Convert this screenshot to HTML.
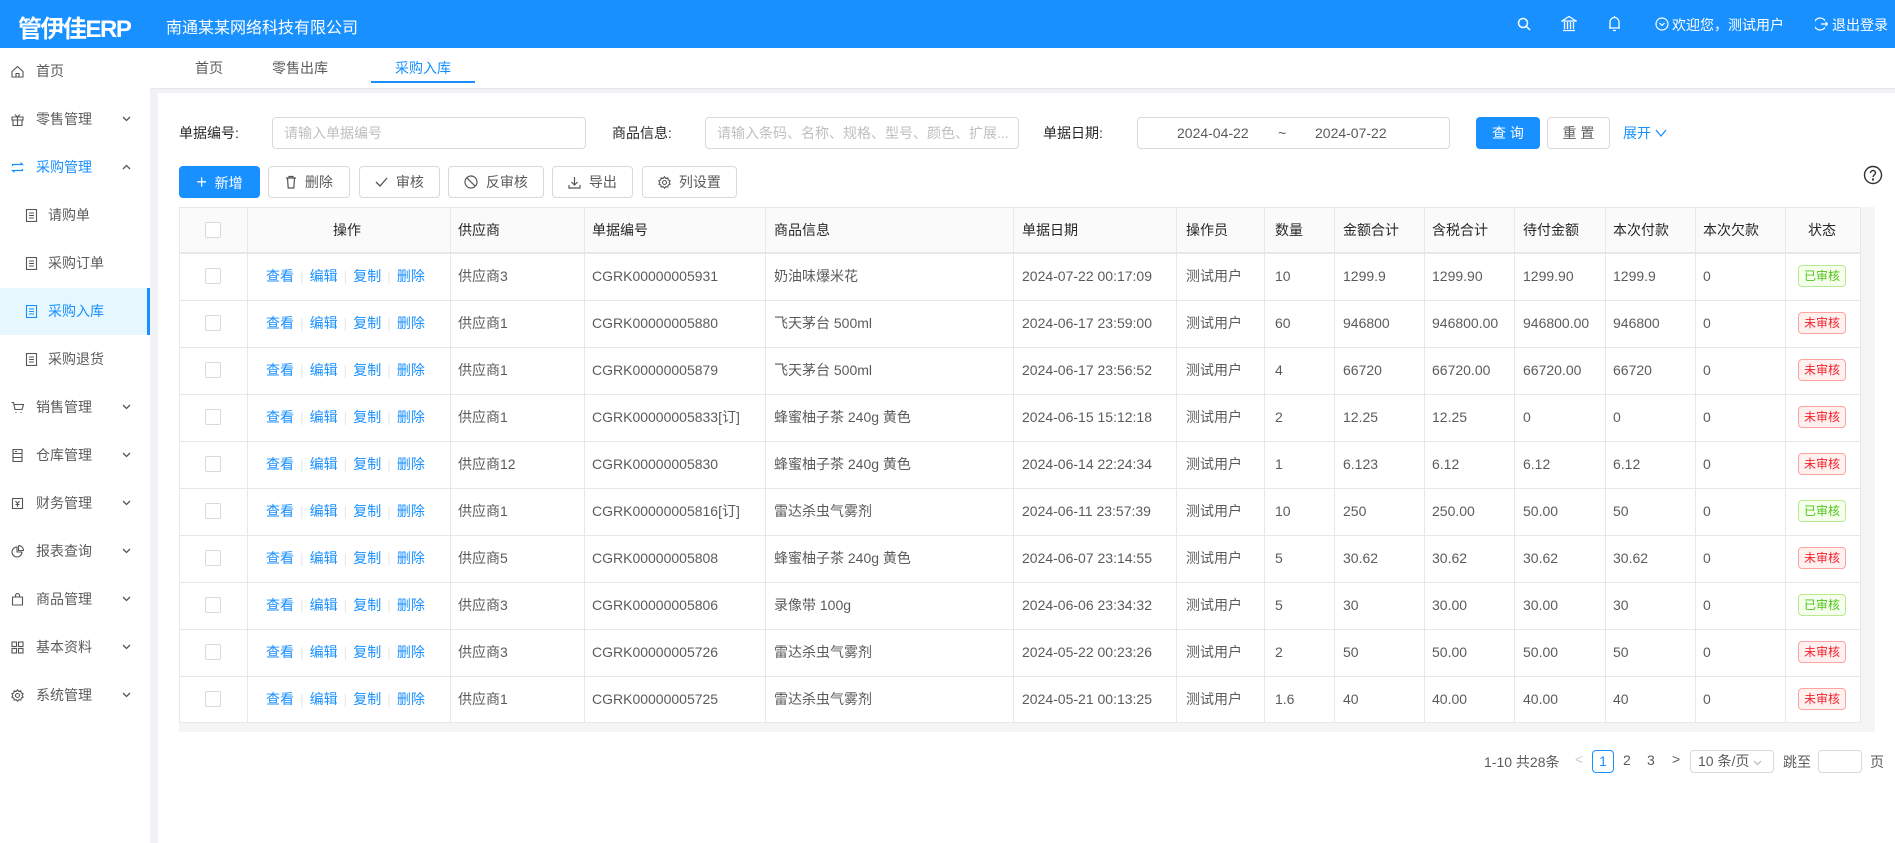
<!DOCTYPE html>
<html><head><meta charset="utf-8"><style>
*{margin:0;padding:0;box-sizing:border-box}
body{width:1895px;height:843px;overflow:hidden;background:#fff;font-family:"Liberation Sans","Noto Sans CJK SC",sans-serif;font-size:14px;color:rgba(0,0,0,.65);position:relative}
.a{position:absolute;white-space:nowrap}
.hd{left:0;top:0;width:1895px;height:48px;background:#1890ff;color:#fff}
.side{left:0;top:48px;width:150px;height:795px;background:#fff}
.gap{left:150px;top:48px;width:8px;height:795px;background:#f0f2f5}
.mi{left:0;width:150px;height:47px;line-height:47px;font-size:14px;color:rgba(0,0,0,.65)}
.mi .ic{position:absolute;left:11px;top:17px;width:13px;height:13px}
.mi .t{position:absolute;left:36px}
.mi .ar{position:absolute;left:122px;top:20px;width:9px;height:6px}
.sub .t{left:48px}.sub .ic{left:25px}
.inp{border:1px solid #d9d9d9;border-radius:4px;height:32px;background:#fff;color:#bfbfbf;line-height:30px;padding-left:11px}
.btn{border:1px solid #d9d9d9;border-radius:4px;height:32px;line-height:30px;text-align:center;background:#fff;color:rgba(0,0,0,.65)}
.th{top:207px;height:46px;line-height:46px;color:rgba(0,0,0,.85);}
.cb{width:16px;height:16px;border:1px solid #d9d9d9;border-radius:2px;background:#fff}
.tag{height:22px;line-height:20px;padding:0 5px;font-size:12px;border-radius:4px}
.ok{color:#52c41a;background:#f6ffed;border:1px solid #b7eb8f}
.no{color:#f5222d;background:#fff1f0;border:1px solid #ffa39e}
.lk{color:#1890ff}
.sep{color:#e8e8e8;margin:0 6px}
.cell{height:47px;line-height:47px}
</style></head><body>
<div class="a hd">
 <div class="a" style="left:18px;top:9px;font-size:24px;font-weight:bold;letter-spacing:-1.5px">管伊佳ERP</div>
 <div class="a" style="left:166px;top:14px;font-size:16px">南通某某网络科技有限公司</div>
 <svg class="a" style="left:1517px;top:17px" width="14" height="14" viewBox="0 0 14 14" fill="none" stroke="#fff" stroke-width="1.5"><circle cx="6" cy="6" r="4.5"/><path d="M9.5 9.5L13 13"/></svg>
 <svg class="a" style="left:1561px;top:15px" width="16" height="17" viewBox="0 0 16 17" fill="none" stroke="#fff" stroke-width="1.3"><path d="M1 6L8 1.5 15 6Z M2 15.5h12 M3.5 7v7 M6.5 7v7 M9.5 7v7 M12.5 7v7"/></svg>
 <svg class="a" style="left:1608px;top:15px" width="13" height="17" viewBox="0 0 13 17" fill="none" stroke="#fff" stroke-width="1.3"><path d="M2 13V7a4.5 4.5 0 019 0v6H1h11 M5 15.5h3 M6.5 1v1.5"/></svg>
 <svg class="a" style="left:1655px;top:17px" width="14" height="14" viewBox="0 0 14 14" fill="none" stroke="#fff" stroke-width="1.2"><circle cx="7" cy="7" r="6"/><path d="M4.5 6L7 8.5 9.5 6"/></svg>
 <div class="a" style="left:1672px;top:15px;font-size:14px">欢迎您，测试用户</div>
 <svg class="a" style="left:1815px;top:17px" width="13" height="14" viewBox="0 0 13 14" fill="none" stroke="#fff" stroke-width="1.2"><path d="M10 3.5A6 6 0 1010 10.5 M6 7h6.5 M10.5 5l2 2-2 2"/></svg>
 <div class="a" style="left:1832px;top:15px;font-size:14px">退出登录</div>
</div>
<div class="a side">
 <div class="a mi" style="top:0"><svg class="ic" viewBox="0 0 13 13" fill="none" stroke="#555" stroke-width="1.1"><path d="M1 6.5L6.5 1.5 12 6.5V12H1Z M5 12V8.5h3V12"/></svg><span class="t">首页</span></div>
 <div class="a mi" style="top:48px"><svg class="ic" viewBox="0 0 13 13" fill="none" stroke="#555" stroke-width="1.1"><path d="M1 4h11v3H1Z M2 7v5.5h9V7 M6.5 4v8.5 M4 1.5l2.5 2.5 2.5-2.5"/></svg><span class="t">零售管理</span><svg class="ar" viewBox="0 0 9 6" fill="none" stroke="#555" stroke-width="1.3"><path d="M1 1l3.5 3.5L8 1"/></svg></div>
 <div class="a mi" style="top:96px;color:#1890ff"><svg class="ic" viewBox="0 0 13 13" fill="none" stroke="#1890ff" stroke-width="1.2"><path d="M1.5 5V3.5h10L9.5 1.5 M11.5 8v1.5h-10l2 2"/></svg><span class="t">采购管理</span><svg class="ar" viewBox="0 0 9 6" fill="none" stroke="#555" stroke-width="1.3"><path d="M1 5l3.5-3.5L8 5"/></svg></div>
 <div class="a mi sub" style="top:144px"><svg class="ic" viewBox="0 0 13 13" fill="none" stroke="#555" stroke-width="1.1"><rect x="1.5" y="0.5" width="10" height="12"/><path d="M4 4h5M4 6.5h5M4 9h5"/></svg><span class="t">请购单</span></div>
 <div class="a mi sub" style="top:192px"><svg class="ic" viewBox="0 0 13 13" fill="none" stroke="#555" stroke-width="1.1"><rect x="1.5" y="0.5" width="10" height="12"/><path d="M4 4h5M4 6.5h5M4 9h5"/></svg><span class="t">采购订单</span></div>
 <div class="a mi sub" style="top:240px;background:#e6f7ff;color:#1890ff;border-right:3px solid #1890ff"><svg class="ic" viewBox="0 0 13 13" fill="none" stroke="#1890ff" stroke-width="1.1"><rect x="1.5" y="0.5" width="10" height="12"/><path d="M4 4h5M4 6.5h5M4 9h5"/></svg><span class="t">采购入库</span></div>
 <div class="a mi sub" style="top:288px"><svg class="ic" viewBox="0 0 13 13" fill="none" stroke="#555" stroke-width="1.1"><rect x="1.5" y="0.5" width="10" height="12"/><path d="M4 4h5M4 6.5h5M4 9h5"/></svg><span class="t">采购退货</span></div>
 <div class="a mi" style="top:336px"><svg class="ic" viewBox="0 0 13 13" fill="none" stroke="#555" stroke-width="1.1"><path d="M0.5 1.5h2l1.5 7h7l1.5-5H3 M4.5 11.5h1M9.5 11.5h1"/></svg><span class="t">销售管理</span><svg class="ar" viewBox="0 0 9 6" fill="none" stroke="#555" stroke-width="1.3"><path d="M1 1l3.5 3.5L8 1"/></svg></div>
 <div class="a mi" style="top:384px"><svg class="ic" viewBox="0 0 13 13" fill="none" stroke="#555" stroke-width="1.1"><rect x="2" y="0.5" width="9" height="12"/><path d="M2 4.5h9M2 8.5h9M4 2.5h2"/></svg><span class="t">仓库管理</span><svg class="ar" viewBox="0 0 9 6" fill="none" stroke="#555" stroke-width="1.3"><path d="M1 1l3.5 3.5L8 1"/></svg></div>
 <div class="a mi" style="top:432px"><svg class="ic" viewBox="0 0 13 13" fill="none" stroke="#555" stroke-width="1.1"><path d="M1.5 1.5h10v10h-10Z M4.5 4l2 2.5 2-2.5 M6.5 6.5v3.5M4.5 7.5h4"/></svg><span class="t">财务管理</span><svg class="ar" viewBox="0 0 9 6" fill="none" stroke="#555" stroke-width="1.3"><path d="M1 1l3.5 3.5L8 1"/></svg></div>
 <div class="a mi" style="top:480px"><svg class="ic" viewBox="0 0 13 13" fill="none" stroke="#555" stroke-width="1.1"><path d="M6 2a5 5 0 105 5H6Z M7.5 0.5v5h5a5 5 0 00-5-5"/></svg><span class="t">报表查询</span><svg class="ar" viewBox="0 0 9 6" fill="none" stroke="#555" stroke-width="1.3"><path d="M1 1l3.5 3.5L8 1"/></svg></div>
 <div class="a mi" style="top:528px"><svg class="ic" viewBox="0 0 13 13" fill="none" stroke="#555" stroke-width="1.1"><path d="M1.5 4h10v8h-10Z M4.5 4V2.5a2 2 0 014 0V4"/></svg><span class="t">商品管理</span><svg class="ar" viewBox="0 0 9 6" fill="none" stroke="#555" stroke-width="1.3"><path d="M1 1l3.5 3.5L8 1"/></svg></div>
 <div class="a mi" style="top:576px"><svg class="ic" viewBox="0 0 13 13" fill="none" stroke="#555" stroke-width="1.1"><rect x="1" y="1" width="4.5" height="4.5"/><rect x="7.5" y="1" width="4.5" height="4.5"/><rect x="1" y="7.5" width="4.5" height="4.5"/><rect x="7.5" y="7.5" width="4.5" height="4.5"/></svg><span class="t">基本资料</span><svg class="ar" viewBox="0 0 9 6" fill="none" stroke="#555" stroke-width="1.3"><path d="M1 1l3.5 3.5L8 1"/></svg></div>
 <div class="a mi" style="top:624px"><svg class="ic" viewBox="0 0 13 13" fill="none" stroke="#555" stroke-width="1.1"><circle cx="6.5" cy="6.5" r="2"/><path d="M6.5 0.8l1.3 1.6 2-.5.4 2 1.9.9-.9 1.7.9 1.7-1.9.9-.4 2-2-.5-1.3 1.6-1.3-1.6-2 .5-.4-2-1.9-.9.9-1.7-.9-1.7 1.9-.9.4-2 2 .5Z"/></svg><span class="t">系统管理</span><svg class="ar" viewBox="0 0 9 6" fill="none" stroke="#555" stroke-width="1.3"><path d="M1 1l3.5 3.5L8 1"/></svg></div>
</div>
<div class="a gap"></div>
<!-- tabs -->
<div class="a" style="left:150px;top:48px;width:1745px;height:41px;background:#fff;border-bottom:1px solid #e8e8e8"></div>
<div class="a" style="left:150px;top:89px;width:1745px;height:4px;background:#f0f2f5"></div>
<div class="a" style="left:195px;top:48px;line-height:41px">首页</div>
<div class="a" style="left:272px;top:48px;line-height:41px">零售出库</div>
<div class="a" style="left:395px;top:48px;line-height:41px;color:#1890ff">采购入库</div>
<div class="a" style="left:371px;top:81px;width:104px;height:2px;background:#1890ff"></div>
<!-- search -->
<div class="a" style="left:179px;top:117px;line-height:32px;color:rgba(0,0,0,.85)">单据编号:</div>
<div class="a inp" style="left:272px;top:117px;width:314px">请输入单据编号</div>
<div class="a" style="left:612px;top:117px;line-height:32px;color:rgba(0,0,0,.85)">商品信息:</div>
<div class="a inp" style="left:705px;top:117px;width:314px">请输入条码、名称、规格、型号、颜色、扩展...</div>
<div class="a" style="left:1043px;top:117px;line-height:32px;color:rgba(0,0,0,.85)">单据日期:</div>
<div class="a inp" style="left:1137px;top:117px;width:313px;color:rgba(0,0,0,.65)"><span class="a" style="left:39px">2024-04-22</span><span class="a" style="left:140px">~</span><span class="a" style="left:177px">2024-07-22</span></div>
<div class="a btn" style="left:1476px;top:117px;width:64px;background:#1890ff;border-color:#1890ff;color:#fff">查 询</div>
<div class="a btn" style="left:1547px;top:117px;width:63px">重 置</div>
<div class="a" style="left:1623px;top:117px;line-height:32px;color:#1890ff">展开 <svg width="12" height="10" viewBox="0 0 12 10" fill="none" stroke="#1890ff" stroke-width="1.3"><path d="M1 2l5 6 5-6"/></svg></div>
<!-- toolbar -->
<div class="a btn" style="left:179px;top:166px;width:81px;background:#1890ff;border-color:#1890ff;color:#fff"><b style="font-size:18px;font-weight:normal">+</b>&nbsp; 新增</div>
<div class="a btn" style="left:268px;top:166px;width:82px"><svg width="12" height="14" viewBox="0 0 12 14" fill="none" stroke="#555" stroke-width="1.2" style="vertical-align:-2px"><path d="M1 3h10 M4 3V1.5h4V3 M2.5 3l.7 10h5.6l.7-10"/></svg>&nbsp; 删除</div>
<div class="a btn" style="left:359px;top:166px;width:81px"><svg width="13" height="10" viewBox="0 0 13 10" fill="none" stroke="#555" stroke-width="1.3"><path d="M1 5l4 4 7-8"/></svg>&nbsp; 审核</div>
<div class="a btn" style="left:448px;top:166px;width:96px"><svg width="14" height="14" viewBox="0 0 14 14" fill="none" stroke="#555" stroke-width="1.2" style="vertical-align:-2px"><circle cx="7" cy="7" r="6"/><path d="M2.8 2.8l8.4 8.4"/></svg>&nbsp; 反审核</div>
<div class="a btn" style="left:552px;top:166px;width:81px"><svg width="13" height="13" viewBox="0 0 13 13" fill="none" stroke="#555" stroke-width="1.2" style="vertical-align:-2px"><path d="M6.5 1v8 M3.5 6l3 3 3-3 M1 9v3h11V9"/></svg>&nbsp; 导出</div>
<div class="a btn" style="left:642px;top:166px;width:95px"><svg width="13" height="13" viewBox="0 0 13 13" fill="none" stroke="#555" stroke-width="1.1" style="vertical-align:-2px"><circle cx="6.5" cy="6.5" r="2"/><path d="M6.5 0.8l1.3 1.6 2-.5.4 2 1.9.9-.9 1.7.9 1.7-1.9.9-.4 2-2-.5-1.3 1.6-1.3-1.6-2 .5-.4-2-1.9-.9.9-1.7-.9-1.7 1.9-.9.4-2 2 .5Z"/></svg>&nbsp; 列设置</div>
<svg class="a" style="left:1863px;top:165px" width="20" height="20" viewBox="0 0 20 20" fill="none" stroke="#333" stroke-width="1.4"><circle cx="10" cy="10" r="8.5"/><path d="M7.5 8a2.5 2.5 0 115 0c0 1.8-2.5 2-2.5 4"/><circle cx="10" cy="14.5" r=".5"/></svg>
<!-- table -->
<div class="a" style="left:179px;top:207px;width:1696px;height:525px;background:#f5f5f5"></div>
<div class="a" style="left:179px;top:207px;width:1682px;height:516px;background:#fff;border:1px solid #e8e8e8"></div>
<div class="a" style="left:179px;top:207px;width:1682px;height:46px;background:#fafafa;border:1px solid #e8e8e8"></div>
<div id="grid"></div>
<div class="a" style="left:1484px;top:752px">1-10 共28条</div>
<div class="a" style="left:1575px;top:751px;color:#ccc">&lt;</div>
<div class="a" style="left:1592px;top:750px;width:22px;height:23px;border:1px solid #1890ff;border-radius:4px;color:#1890ff;text-align:center;line-height:21px">1</div>
<div class="a" style="left:1623px;top:752px">2</div>
<div class="a" style="left:1647px;top:752px">3</div>
<div class="a" style="left:1672px;top:751px">&gt;</div>
<div class="a" style="left:1690px;top:750px;width:84px;height:23px;border:1px solid #d9d9d9;border-radius:4px;line-height:21px;padding-left:7px">10 条/页 <svg width="9" height="6" viewBox="0 0 9 6" fill="none" stroke="#bbb" stroke-width="1.2"><path d="M1 1l3.5 3.5L8 1"/></svg></div>
<div class="a" style="left:1783px;top:752px">跳至</div>
<div class="a" style="left:1818px;top:750px;width:44px;height:23px;border:1px solid #d9d9d9;border-radius:4px"></div>
<div class="a" style="left:1870px;top:752px">页</div>
<script>
var cols=[179,247,450,584,765,1013,1176,1264,1334,1424,1514,1605,1695,1785,1861];
var g='';
for(var i=1;i<cols.length-1;i++)g+='<div class="a" style="left:'+cols[i]+'px;top:207px;width:1px;height:516px;background:#e8e8e8"></div>';
var hx=[458,592,774,1022,1186,1275,1343,1432,1523,1613,1703];
var hn=['供应商','单据编号','商品信息','单据日期','操作员','数量','金额合计','含税合计','待付金额','本次付款','本次欠款'];
g+='<div class="a cb" style="left:205px;top:222px"></div>';
g+='<div class="a th" style="left:333px">操作</div><div class="a th" style="left:1808px">状态</div>';
for(var i=0;i<hn.length;i++)g+='<div class="a th" style="left:'+hx[i]+'px">'+hn[i]+'</div>';
var d=[
['供应商3','CGRK00000005931','奶油味爆米花','2024-07-22 00:17:09','10','1299.9','1299.90','1299.90','1299.9',1],
['供应商1','CGRK00000005880','飞天茅台 500ml','2024-06-17 23:59:00','60','946800','946800.00','946800.00','946800',0],
['供应商1','CGRK00000005879','飞天茅台 500ml','2024-06-17 23:56:52','4','66720','66720.00','66720.00','66720',0],
['供应商1','CGRK00000005833[订]','蜂蜜柚子茶 240g 黄色','2024-06-15 15:12:18','2','12.25','12.25','0','0',0],
['供应商12','CGRK00000005830','蜂蜜柚子茶 240g 黄色','2024-06-14 22:24:34','1','6.123','6.12','6.12','6.12',0],
['供应商1','CGRK00000005816[订]','雷达杀虫气雾剂','2024-06-11 23:57:39','10','250','250.00','50.00','50',1],
['供应商5','CGRK00000005808','蜂蜜柚子茶 240g 黄色','2024-06-07 23:14:55','5','30.62','30.62','30.62','30.62',0],
['供应商3','CGRK00000005806','录像带 100g','2024-06-06 23:34:32','5','30','30.00','30.00','30',1],
['供应商3','CGRK00000005726','雷达杀虫气雾剂','2024-05-22 00:23:26','2','50','50.00','50.00','50',0],
['供应商1','CGRK00000005725','雷达杀虫气雾剂','2024-05-21 00:13:25','1.6','40','40.00','40.00','40',0]];
for(var r=0;r<10;r++){var t=253+47*r;var row=d[r];
g+='<div class="a" style="left:180px;top:'+t+'px;width:1680px;height:1px;background:#e8e8e8"></div>';
g+='<div class="a cb" style="left:205px;top:'+(t+15)+'px"></div>';
g+='<div class="a lk cell" style="left:266px;top:'+t+'px">查看<span class="sep">|</span>编辑<span class="sep">|</span>复制<span class="sep">|</span>删除</div>';
var vals=row.slice(0,9).concat(['0']);
var xs=[458,592,774,1022,1275,1343,1432,1523,1613,1703];
for(var c=0;c<10;c++){g+='<div class="a cell" style="left:'+xs[c]+'px;top:'+t+'px">'+vals[c]+'</div>';if(c==3)g+='<div class="a cell" style="left:1186px;top:'+t+'px">测试用户</div>';}
g+='<div class="a tag '+(row[9]?'ok':'no')+'" style="left:1798px;top:'+(t+12)+'px">'+(row[9]?'已审核':'未审核')+'</div>';}
document.getElementById('grid').outerHTML=g;
</script>
</body></html>
